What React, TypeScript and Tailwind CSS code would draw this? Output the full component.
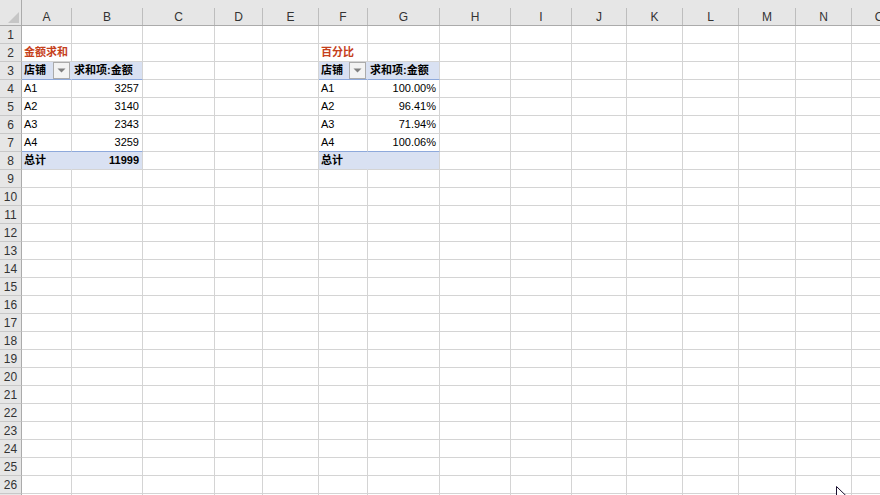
import React from "react";

const COLS = ["A", "B", "C", "D", "E", "F", "G", "H", "I", "J", "K", "L", "M", "N", "O"];
const GRID =
  "grid grid-cols-[22px_50px_71px_72px_48px_56px_49px_72px_71px_61px_55px_56px_56px_57px_56px_56px]";

type CellDef = {
  text?: string;
  align?: "left" | "right";
  bold?: boolean;
  red?: boolean;
  kind?: "head" | "total";
  dropdown?: boolean;
  noRight?: boolean;
};

const cells: Record<string, CellDef> = {
  A2: { text: "金额求和", bold: true, red: true },
  A3: { text: "店铺", bold: true, kind: "head", dropdown: true, noRight: true },
  B3: { text: "求和项:金额", bold: true, kind: "head" },
  A4: { text: "A1" },
  A5: { text: "A2" },
  A6: { text: "A3" },
  A7: { text: "A4" },
  B4: { text: "3257", align: "right" },
  B5: { text: "3140", align: "right" },
  B6: { text: "2343", align: "right" },
  B7: { text: "3259", align: "right" },
  A8: { text: "总计", bold: true, kind: "total", noRight: true },
  B8: { text: "11999", bold: true, align: "right", kind: "total" },
  F2: { text: "百分比", bold: true, red: true },
  F3: { text: "店铺", bold: true, kind: "head", dropdown: true, noRight: true },
  G3: { text: "求和项:金额", bold: true, kind: "head" },
  F4: { text: "A1" },
  F5: { text: "A2" },
  F6: { text: "A3" },
  F7: { text: "A4" },
  G4: { text: "100.00%", align: "right" },
  G5: { text: "96.41%", align: "right" },
  G6: { text: "71.94%", align: "right" },
  G7: { text: "100.06%", align: "right" },
  F8: { text: "总计", bold: true, kind: "total", noRight: true },
  G8: { text: "", kind: "total" },
};

const blueBottom = new Set(["A7", "B7", "F7", "G7", "A3", "B3", "F3", "G3"]);

function Dropdown() {
  return (
    <div className="absolute right-[1px] top-[0px] w-[17px] h-[17px] bg-[#f3f3f3] border border-[#ababab] flex items-center justify-center">
      <svg width="9" height="5" viewBox="0 0 9 5">
        <path d="M0.5 0.5 L8.5 0.5 L4.5 4.5 Z" fill="#808080" />
      </svg>
    </div>
  );
}

function Cell({ id }: { id: string }) {
  const c = cells[id];
  const bg =
    c?.kind === "head" || c?.kind === "total" ? "bg-[#d9e1f2]" : "bg-white";
  const rightBorder = c?.noRight ? "border-r-[#d9e1f2]" : "border-r-[#d4d4d4]";
  const bottomBorder = blueBottom.has(id) ? "border-b-[#8ea9db]" : "border-b-[#d4d4d4]";
  return (
    <div
      className={`relative h-[18px] border-r border-b ${rightBorder} ${bottomBorder} ${bg} flex items-center overflow-visible whitespace-nowrap ${
        c?.align === "right" ? "justify-end pr-[3px]" : "justify-start pl-[2px]"
      }`}
    >
      {c?.text ? (
        <span
          className={`text-[11px] leading-none ${c.bold ? "font-bold" : "font-normal"} ${
            c.red ? "text-[#c5401b]" : "text-black"
          }`}
          style={{ fontFamily: '"Liberation Sans", "Noto Sans CJK SC", sans-serif' }}
        >
          {c.text}
        </span>
      ) : null}
      {c?.dropdown ? <Dropdown /> : null}
    </div>
  );
}

export default function App() {
  const rows = Array.from({ length: 26 }, (_, i) => i + 1);
  return (
    <div
      className="relative w-[880px] h-[495px] overflow-hidden bg-white"
      style={{ fontFamily: '"Liberation Sans", "Noto Sans CJK SC", sans-serif' }}
    >
      {/* column header */}
      <div className={`${GRID} h-[26px] bg-[#e6e6e6] border-b border-[#ababab]`}>
        <div className="relative h-[25px] border-r border-[#ababab]">
          <svg className="absolute left-[8px] top-[12px]" width="11" height="11" viewBox="0 0 11 11">
            <path d="M11 0 L11 11 L0 11 Z" fill="#c6c6c6" />
          </svg>
        </div>
        {COLS.map((c) => (
          <div key={c} className="pt-[8px] h-[25px]">
            <div className="h-[17px] border-r border-[#bdbdbd] flex items-center justify-center text-[12px] text-[#333]">
              {c}
            </div>
          </div>
        ))}
      </div>
      {/* body */}
      {rows.map((r) => (
        <div key={r} className={GRID}>
          <div className="h-[18px] bg-[#e6e6e6] border-r border-b border-r-[#ababab] border-b-[#c8c8c8] flex items-center justify-center text-[12px] text-[#333]">
            {r}
          </div>
          {COLS.map((c) => (
            <Cell key={c + r} id={c + r} />
          ))}
        </div>
      ))}
      <div className={GRID}>
        <div className="h-[4px] bg-[#e6e6e6] border-r border-[#ababab]" />
        {COLS.map((c) => (
          <div key={"x" + c} className="h-[4px] border-r border-[#d4d4d4]" />
        ))}
      </div>
      {/* mouse cursor */}
      <svg className="absolute left-[836px] top-[486px]" width="12" height="18" viewBox="0 0 12 18">
        <path d="M0.5 0.5 L0.5 14 L3.8 10.8 L6.2 16.5 L8.2 15.6 L5.9 10.2 L10.5 10.2 Z" fill="white" stroke="#1a1030" strokeWidth="1" />
      </svg>
    </div>
  );
}
